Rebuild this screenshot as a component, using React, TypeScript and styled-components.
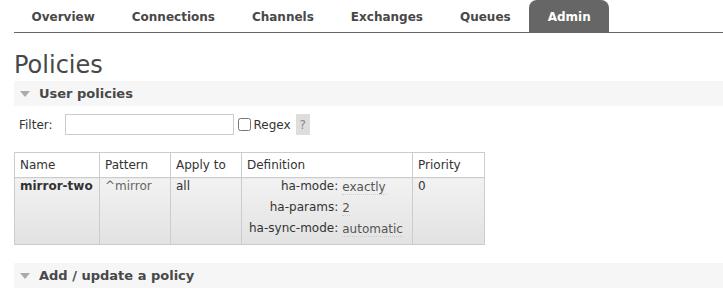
import styled, { createGlobalStyle } from "styled-components";

const GlobalStyle = createGlobalStyle`
  html, body {
    margin: 0;
    padding: 0;
    background: #fff;
  }
  body {
    font-family: Verdana, "DejaVu Sans", sans-serif;
    font-size: 12px;
    color: #484848;
  }
`;

const tabs = ["Overview", "Connections", "Channels", "Exchanges", "Queues", "Admin"];

type Policy = {
  name: string;
  pattern: string;
  applyTo: string;
  definition: [string, string][];
  priority: number;
};

const policies: Policy[] = [
  {
    name: "mirror-two",
    pattern: "^mirror",
    applyTo: "all",
    definition: [
      ["ha-mode", "exactly"],
      ["ha-params", "2"],
      ["ha-sync-mode", "automatic"],
    ],
    priority: 0,
  },
];

export default function App() {
  return (
    <Page>
      <GlobalStyle />
      <Nav>
        <TabList>
          {tabs.map((t) => (
            <Tab key={t} $active={t === "Admin"}>
              {t}
            </Tab>
          ))}
        </TabList>
      </Nav>
      <Title>Policies</Title>
      <Section>
        <SectionHead>
          <Arrow />
          User policies
        </SectionHead>
        <FilterRow>
          <label>Filter:</label>
          <FilterInput type="text" />
          <Check type="checkbox" />
          <span>Regex</span>
          <Help>?</Help>
        </FilterRow>
        <Table>
          <thead>
            <tr>
              <Th>Name</Th>
              <Th>Pattern</Th>
              <Th>Apply to</Th>
              <Th>Definition</Th>
              <Th>Priority</Th>
            </tr>
          </thead>
          <tbody>
            {policies.map((p) => (
              <tr key={p.name}>
                <Td>
                  <b>{p.name}</b>
                </Td>
                <Td>
                  <Muted>{p.pattern}</Muted>
                </Td>
                <Td>{p.applyTo}</Td>
                <Td>
                  <Facts>
                    <tbody>
                      {p.definition.map(([k, v]) => (
                        <tr key={k}>
                          <FactKey>{k}:</FactKey>
                          <FactVal>
                            <Dotted>{v}</Dotted>
                          </FactVal>
                        </tr>
                      ))}
                    </tbody>
                  </Facts>
                </Td>
                <Td>{p.priority}</Td>
              </tr>
            ))}
          </tbody>
        </Table>
      </Section>
      <Section>
        <SectionHead>
          <Arrow />
          Add / update a policy
        </SectionHead>
      </Section>
    </Page>
  );
}

const Page = styled.div`
  padding: 0 0 0 14px;
`;

const Nav = styled.div`
  height: 32px;
  border-bottom: 1px solid #666;
`;

const TabList = styled.div`
  display: flex;
  height: 100%;
  margin-left: -1px;
`;

const Tab = styled.div<{ $active?: boolean }>`
  display: flex;
  align-items: center;
  padding: 2px 18.5px 0;
  font-weight: bold;
  font-size: 12px;
  color: ${(p) => (p.$active ? "#fff" : "#484848")};
  background: ${(p) => (p.$active ? "#666" : "transparent")};
  border-radius: 8px 8px 0 0;
`;

const Title = styled.h1`
  margin: 17px 0 0;
  font-size: 24px;
  font-weight: normal;
  line-height: 31px;
  color: #484848;
`;

const Section = styled.div`
  margin-bottom: 18px;
`;

const SectionHead = styled.div`
  display: flex;
  align-items: center;
  height: 25px;
  background: #f6f6f6;
  font-weight: bold;
  font-size: 13px;
  color: #484848;
`;

const Arrow = styled.span`
  width: 0;
  height: 0;
  margin: 1px 9px 0 6px;
  border-left: 5px solid transparent;
  border-right: 5px solid transparent;
  border-top: 6px solid #aaa;
`;

const FilterRow = styled.div`
  display: flex;
  align-items: center;
  padding: 8px 0 0 5px;
  color: #333;
`;

const FilterInput = styled.input`
  width: 169px;
  height: 21px;
  box-sizing: border-box;
  margin: 0 4px 0 12px;
  border: 1px solid #ccc;
  padding: 0;
`;

const Check = styled.input`
  width: 13px;
  height: 13px;
  margin: 0 3px 0 0;
`;

const Help = styled.span`
  display: inline-flex;
  align-items: center;
  justify-content: center;
  width: 14px;
  height: 21px;
  margin-left: 5px;
  background: #ddd;
  color: #888;
`;

const Table = styled.table`
  margin-top: 17px;
  border-collapse: collapse;
  color: #333;
`;

const Th = styled.th`
  text-align: left;
  font-weight: normal;
  height: 24px;
  padding: 0 5px;
  border: 1px solid #ccc;
  background: #fff;
  &:nth-child(1) { width: 74px; }
  &:nth-child(2) { width: 60px; }
  &:nth-child(3) { width: 60px; }
  &:nth-child(4) { width: 160px; }
  &:nth-child(5) { width: 61px; }
`;

const Td = styled.td`
  vertical-align: top;
  padding: 1px 5px 2px;
  border: 1px solid #ccc;
  background: linear-gradient(#f2f2f2, #e2e2e2);
`;

const Muted = styled.span`
  color: #666;
`;

const Facts = styled.table`
  border-collapse: collapse;
  margin-left: 2px;
`;

const FactKey = styled.td`
  text-align: right;
  padding: 0 4px 0 0;
  height: 21px;
  vertical-align: top;
`;

const FactVal = styled.td`
  padding: 1px 0 0;
  vertical-align: top;
  color: #555;
`;

const Dotted = styled.span`
  border-bottom: 1px dotted #ccc;
`;
